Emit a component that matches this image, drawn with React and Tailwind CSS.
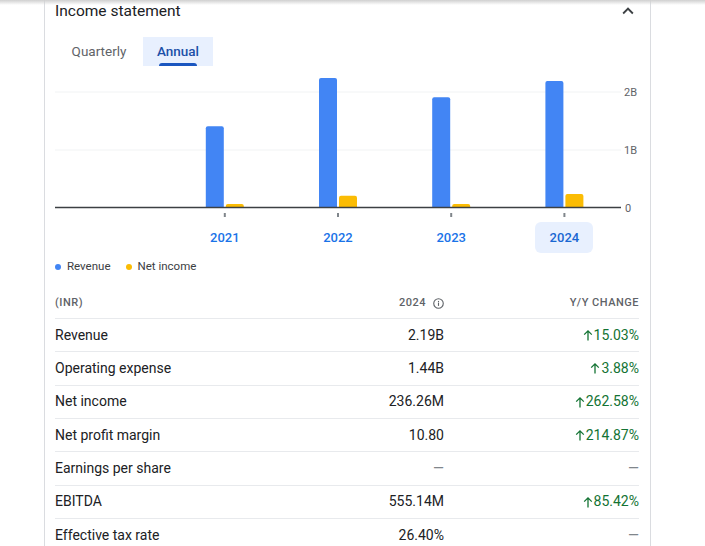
import React from 'react';

const years = [
    { year: '2021', revenue: 1.41, income: 0.07 },
    { year: '2022', revenue: 2.24, income: 0.21 },
    { year: '2023', revenue: 1.91, income: 0.07 },
    { year: '2024', revenue: 2.19, income: 0.24 },
];

const rows = [
    { label: 'Revenue', value: '2.19B', change: '15.03%' },
    { label: 'Operating expense', value: '1.44B', change: '3.88%' },
    { label: 'Net income', value: '236.26M', change: '262.58%' },
    { label: 'Net profit margin', value: '10.80', change: '214.87%' },
    { label: 'Earnings per share', value: null, change: null },
    { label: 'EBITDA', value: '555.14M', change: '85.42%' },
    { label: 'Effective tax rate', value: '26.40%', change: null },
];

const PER_B = 58;
const BASE = 142;
const SLOT = 113.2;

// top-rounded bar
const barPath = (x, top, w) => {
    const r = 2;
    return `M${x},${BASE} L${x},${top + r} Q${x},${top} ${x + r},${top} L${x + w - r},${top} Q${x + w},${top} ${x + w},${top + r} L${x + w},${BASE} Z`;
};

const Chart = () => (
    <svg width="584" height="152" viewBox="0 0 584 152" className="block">
        <line x1="0" x2="566" y1="26" y2="26" stroke="#f1f3f4" strokeWidth="1" />
        <line x1="0" x2="566" y1="84" y2="84" stroke="#f1f3f4" strokeWidth="1" />
        {years.map((d, i) => {
            const cx = SLOT * (i + 1.5);
            return (
                <g key={d.year}>
                    <path d={barPath(cx - 19, BASE - d.revenue * PER_B, 18)} fill="#4285f4" />
                    <path d={barPath(cx + 1, BASE - d.income * PER_B, 18)} fill="#fbbc04" />
                    <rect x={cx - 1} y="147" width="2" height="4" fill="#80868b" />
                </g>
            );
        })}
        <line x1="0" x2="566" y1="141.5" y2="141.5" stroke="#3c4043" strokeWidth="1.6" />
        <g fontSize="11" fill="#5f6368" fontFamily="Roboto, sans-serif">
            <text x="569" y="30">2B</text>
            <text x="569" y="88">1B</text>
            <text x="570" y="146">0</text>
        </g>
    </svg>
);

const ArrowUp = () => (
    <svg width="10" height="12" viewBox="0 0 10 12" className="mr-[1px] shrink-0">
        <path d="M5 11.5V1.8M1.2 5.6L5 1.8l3.8 3.8" fill="none" stroke="#137333" strokeWidth="1.3" />
    </svg>
);

const Dash = () => <span className="text-[#80868b]">—</span>;

export default function App() {
    return (
        <div className="relative min-h-screen bg-white font-['Roboto',sans-serif] text-[#202124]">
            {/* header shadow from above */}
            <div className="absolute inset-x-0 top-0 h-[5px] bg-gradient-to-b from-[#d0d0d0] to-transparent"></div>

            <div className="ml-[44px] w-[607px] border-x border-[#dadce0] pl-[10px] pr-[11px] pb-8">
                {/* TITLE */}
                <div className="flex items-center justify-between h-[22px]">
                    <h2 className="text-[15.5px] leading-[22px]">Income statement</h2>
                    <svg width="22" height="22" viewBox="0 0 24 24">
                        <path d="M12 8l-6 6 1.41 1.41L12 10.83l4.59 4.58L18 14z" fill="#3c4043" />
                    </svg>
                </div>

                {/* TABS */}
                <div className="flex mt-[15px] h-[29px] text-[13.5px]">
                    <div className="w-[88px] flex items-center justify-center text-[#5f6368]">Quarterly</div>
                    <div className="w-[70px] relative flex items-center justify-center bg-[#e8f0fe] text-[#1b4fa8] font-medium">
                        Annual
                        <div className="absolute bottom-0 left-[16px] right-[16px] h-[3px] rounded-t-sm bg-[#1a56c0]"></div>
                    </div>
                </div>

                {/* CHART */}
                <Chart />
                <div className="grid grid-cols-5 w-[566px] mt-[4px]">
                    <div></div>
                    {years.map((d) => (
                        <div key={d.year} className="flex justify-center">
                            <div className={`w-[58px] h-[31px] rounded-md flex items-center justify-center text-[13px] font-medium ${d.year === '2024' ? 'bg-[#e8f0fe] text-[#1967d2]' : 'text-[#1a73e8]'}`}>
                                {d.year}
                            </div>
                        </div>
                    ))}
                </div>

                {/* LEGEND */}
                <div className="flex items-center mt-[7px] h-[14px] text-[11.5px] text-[#3c4043]">
                    <span className="w-[6px] h-[6px] rounded-full bg-[#4285f4] mr-[6px]"></span>
                    <span>Revenue</span>
                    <span className="w-[6px] h-[6px] rounded-full bg-[#fbbc04] ml-[15px] mr-[6px]"></span>
                    <span>Net income</span>
                </div>

                {/* TABLE */}
                <div className="mt-[11px]">
                    <div className="flex items-center h-[33px] pt-[4px] text-[11px] font-medium tracking-[0.5px] text-[#5f6368]">
                        <div className="flex-1">(INR)</div>
                        <div className="w-[150px] flex items-center justify-end gap-[7px]">
                            2024
                            <svg width="11" height="11" viewBox="0 0 12 12">
                                <circle cx="6" cy="6" r="5.2" fill="none" stroke="#5f6368" strokeWidth="1.2" />
                                <rect x="5.4" y="5" width="1.2" height="3.6" fill="#5f6368" />
                                <rect x="5.4" y="3.2" width="1.2" height="1.2" fill="#5f6368" />
                            </svg>
                        </div>
                        <div className="w-[195px] text-right">Y/Y CHANGE</div>
                    </div>
                    {rows.map((r) => (
                        <div key={r.label} className="flex items-center h-[33.33px] border-t border-[#e8eaed] text-[14px]">
                            <div className="flex-1">{r.label}</div>
                            <div className="w-[150px] text-right">{r.value ?? <Dash />}</div>
                            <div className="w-[195px] flex items-center justify-end">
                                {r.change ? (
                                    <span className="flex items-center text-[#137333]">
                                        <ArrowUp />
                                        {r.change}
                                    </span>
                                ) : (
                                    <Dash />
                                )}
                            </div>
                        </div>
                    ))}
                </div>
            </div>
        </div>
    );
}
